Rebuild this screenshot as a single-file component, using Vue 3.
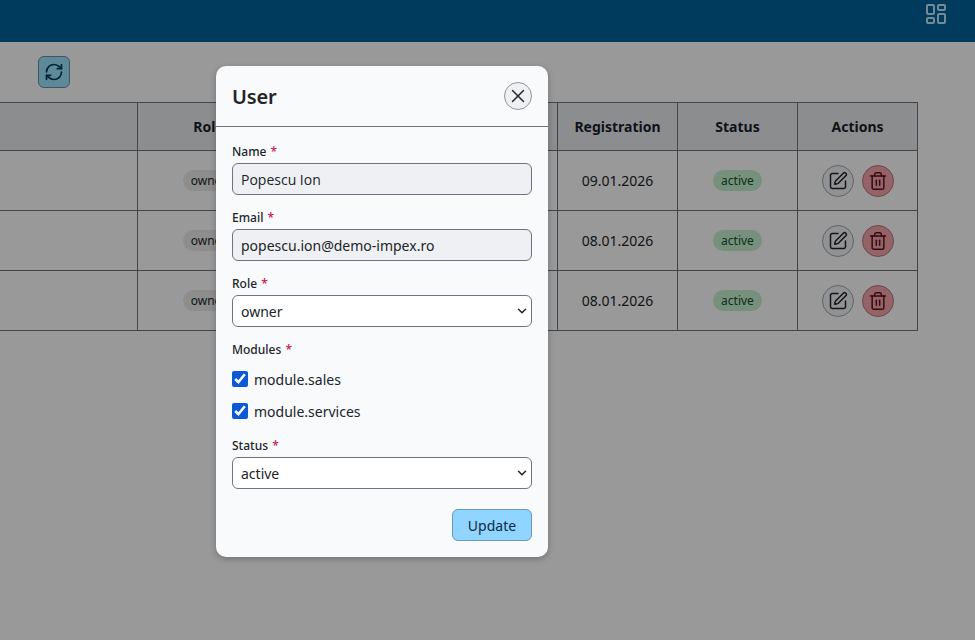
<script setup>
const rows = [
  { date: '09.01.2026' },
  { date: '08.01.2026' },
  { date: '08.01.2026' },
]
</script>

<template>
  <div class="page">
    <header class="topbar">
      <svg class="dash" viewBox="0 0 24 24" fill="none" stroke="currentColor" stroke-width="2" stroke-linecap="round" stroke-linejoin="round">
        <rect x="3" y="3" width="7" height="9" rx="1" /><rect x="14" y="3" width="7" height="5" rx="1" /><rect x="14" y="12" width="7" height="9" rx="1" /><rect x="3" y="16" width="7" height="5" rx="1" />
      </svg>
    </header>
    <main class="content">
      <button class="refresh">
        <svg viewBox="0 0 24 24" fill="none" stroke="currentColor" stroke-width="2" stroke-linecap="round" stroke-linejoin="round">
          <path d="M3 12a9 9 0 0 1 9-9 9.75 9.75 0 0 1 6.74 2.74L21 8" /><path d="M21 3v5h-5" /><path d="M21 12a9 9 0 0 1-9 9 9.75 9.75 0 0 1-6.74-2.74L3 16" /><path d="M8 16H3v5" />
        </svg>
      </button>
      <div class="table">
        <div class="cell head"></div>
        <div class="cell head">Role</div>
        <div class="cell head"></div>
        <div class="cell head">Registration</div>
        <div class="cell head">Status</div>
        <div class="cell head">Actions</div>
        <template v-for="(r, i) in rows" :key="i">
          <div class="cell"></div>
          <div class="cell"><span class="badge owner">owner</span></div>
          <div class="cell"></div>
          <div class="cell">{{ r.date }}</div>
          <div class="cell"><span class="badge active">active</span></div>
          <div class="cell actions">
            <button class="round edit">
              <svg viewBox="0 0 24 24" fill="none" stroke="currentColor" stroke-width="1.8" stroke-linecap="round" stroke-linejoin="round">
                <path d="M12 3H5a2 2 0 0 0-2 2v14a2 2 0 0 0 2 2h14a2 2 0 0 0 2-2v-7" /><path d="M18.375 2.625a1 1 0 0 1 3 3l-9.013 9.014a2 2 0 0 1-.853.505l-2.873.84a.5.5 0 0 1-.62-.62l.84-2.873a2 2 0 0 1 .506-.852z" />
              </svg>
            </button>
            <button class="round del">
              <svg viewBox="0 0 24 24" fill="none" stroke="currentColor" stroke-width="1.8" stroke-linecap="round" stroke-linejoin="round">
                <path d="M3 6h18" /><path d="M19 6v14c0 1-1 2-2 2H7c-1 0-2-1-2-2V6" /><path d="M8 6V4c0-1 1-2 2-2h4c1 0 2 1 2 2v2" /><path d="M10 11v6" /><path d="M14 11v6" />
              </svg>
            </button>
          </div>
        </template>
      </div>
    </main>

    <div class="overlay">
      <form class="modal" @submit.prevent>
        <div class="modal-head">
          <h2>User</h2>
          <button type="button" class="close">
            <svg viewBox="0 0 24 24" fill="none" stroke="currentColor" stroke-width="1.6" stroke-linecap="round" stroke-linejoin="round">
              <path d="M18 6 6 18" /><path d="m6 6 12 12" />
            </svg>
          </button>
        </div>
        <div class="modal-body">
          <div class="field">
            <label>Name <span class="req">*</span></label>
            <input class="control name" value="Popescu Ion" disabled />
          </div>
          <div class="field">
            <label>Email <span class="req">*</span></label>
            <input class="control" value="popescu.ion@demo-impex.ro" disabled />
          </div>
          <div class="field">
            <label>Role <span class="req">*</span></label>
            <div class="select-wrap">
              <select class="control"><option>owner</option><option>admin</option></select>
              <svg class="chev" viewBox="0 0 10 6" fill="none" stroke="currentColor" stroke-width="1.5" stroke-linecap="round" stroke-linejoin="round"><path d="M1.5 1.2l3.5 3.5 3.5-3.5" /></svg>
            </div>
          </div>
          <div class="field modules">
            <label>Modules <span class="req">*</span></label>
            <label class="check"><input type="checkbox" checked /> <span>module.sales</span></label>
            <label class="check"><input type="checkbox" checked /> <span>module.services</span></label>
          </div>
          <div class="field">
            <label>Status <span class="req">*</span></label>
            <div class="select-wrap">
              <select class="control"><option>active</option><option>inactive</option></select>
              <svg class="chev" viewBox="0 0 10 6" fill="none" stroke="currentColor" stroke-width="1.5" stroke-linecap="round" stroke-linejoin="round"><path d="M1.5 1.2l3.5 3.5 3.5-3.5" /></svg>
            </div>
          </div>
          <div class="foot">
            <button type="submit" class="update">Update</button>
          </div>
        </div>
      </form>
    </div>
  </div>
</template>

<style>
html, body { margin: 0; background: #fff; }
</style>

<style scoped>
.page {
  position: relative;
  width: 975px;
  height: 640px;
  overflow: hidden;
  font-family: "Noto Sans", sans-serif;
  font-size: 14px;
  color: #212529;
  background: #fff;
}
.topbar {
  height: 42px;
  background: #00619a;
  display: flex;
  justify-content: flex-end;
  align-items: flex-start;
  padding-right: 27px;
  box-sizing: border-box;
}
.dash { width: 24px; height: 24px; margin-top: 2px; color: #c0e6fa; }
.content { padding: 14px 57px 0 0; }
.refresh {
  display: flex;
  align-items: center;
  justify-content: center;
  width: 32px;
  height: 32px;
  margin: 0 0 14px 38px;
  padding: 0;
  border: 1px solid #6a8ea3;
  border-radius: 6px;
  background: #9ce4ff;
  color: #003a5c;
}
.refresh svg { width: 20px; height: 20px; }
.table {
  display: grid;
  grid-template-columns: 137px 142px 278px 120px 120px 120px;
  grid-template-rows: 47px 60px 60px 60px;
  border-top: 1px solid #6c757d;
  border-bottom: 1px solid #6c757d;
  border-right: 1px solid #6c757d;
  box-sizing: border-box;
  width: 918px;
}
.cell {
  display: flex;
  align-items: center;
  justify-content: center;
  border-left: 1px solid #6c757d;
  border-top: 1px solid #6c757d;
  background: #fff;
}
.cell:nth-child(6n + 1) { border-left: 0; }
.head {
  border-top: 0;
  background: #e9ecef;
  font-weight: 700;
  color: #1a1f2b;
}
.badge {
  border-radius: 11px;
  font-size: 12px;
  line-height: 22px;
  height: 21px;
  padding: 0 8px;
}
.owner { background: #ececec; }
.active { background: #c6f0d2; color: #145228; }
.actions { gap: 8px; }
.round {
  display: flex;
  align-items: center;
  justify-content: center;
  width: 32px;
  height: 32px;
  padding: 0;
  border-radius: 50%;
  border: 1px solid #a0a6ac;
}
.round svg { width: 20px; height: 20px; }
.edit { background: #f1f3f5; color: #212529; }
.del { background: #f5a6ae; color: #5f1020; border-color: #b57880; }

.overlay {
  position: absolute;
  inset: 0;
  background: rgba(0, 0, 0, 0.4);
  padding: 66px 0 0 216px;
  box-sizing: border-box;
}
.modal {
  width: 332px;
  height: 491px;
  box-sizing: border-box;
  background: #f8fafc;
  border-radius: 10px;
  box-shadow: 0 2px 6px rgba(0, 0, 0, 0.25);
}
.modal-head {
  height: 61px;
  box-sizing: border-box;
  display: flex;
  align-items: center;
  justify-content: space-between;
  padding: 0 16px;
  border-bottom: 1px solid #6c757d;
}
.modal-head h2 {
  margin: 0;
  font-size: 20px;
  font-weight: 600;
  letter-spacing: -0.2px;
  color: #212529;
}
.close {
  display: flex;
  align-items: center;
  justify-content: center;
  width: 28px;
  height: 28px;
  padding: 0;
  border-radius: 50%;
  border: 1px solid #8e959c;
  background: #eef0f3;
  color: #212529;
}
.close svg { width: 22px; height: 22px; }
.modal-body { padding: 16px 16px 0; }
.field { display: flex; flex-direction: column; margin-bottom: 14px; }
.field > label:first-child {
  font-size: 12px;
  font-weight: 500;
  line-height: 18px;
  margin-bottom: 2px;
}
.req { color: #c4124c; margin-left: 1px; }
.control {
  box-sizing: border-box;
  width: 300px;
  height: 32px;
  padding: 0 8px;
  border: 1px solid #6c757d;
  border-radius: 6px;
  background: #fff;
  font: 14px "Noto Sans", sans-serif;
  color: #212529;
}
input.control { background: #eef0f3; }
.name.control { font-family: "Open Sans", sans-serif; }
select.control { appearance: none; }
.select-wrap { position: relative; display: flex; }
.chev {
  position: absolute;
  right: 5px;
  top: 13px;
  width: 10px;
  height: 6px;
  color: #212529;
  pointer-events: none;
}
.check {
  display: flex;
  align-items: center;
  gap: 6px;
  height: 32px;
  font-size: 14px;
}
.check input { width: 16px; height: 16px; margin: 0; accent-color: #0a5bd3; }
.modules { margin-bottom: 10px; }
.modules > label:first-child { margin-bottom: 4px; }
.foot { display: flex; justify-content: flex-end; padding-top: 6px; }
.update {
  width: 80px;
  height: 32px;
  padding: 0;
  border: 1px solid #6a9ab5;
  border-radius: 6px;
  background: #90d5ff;
  font: 14px "Noto Sans", sans-serif;
  color: #0c2a44;
}
</style>
